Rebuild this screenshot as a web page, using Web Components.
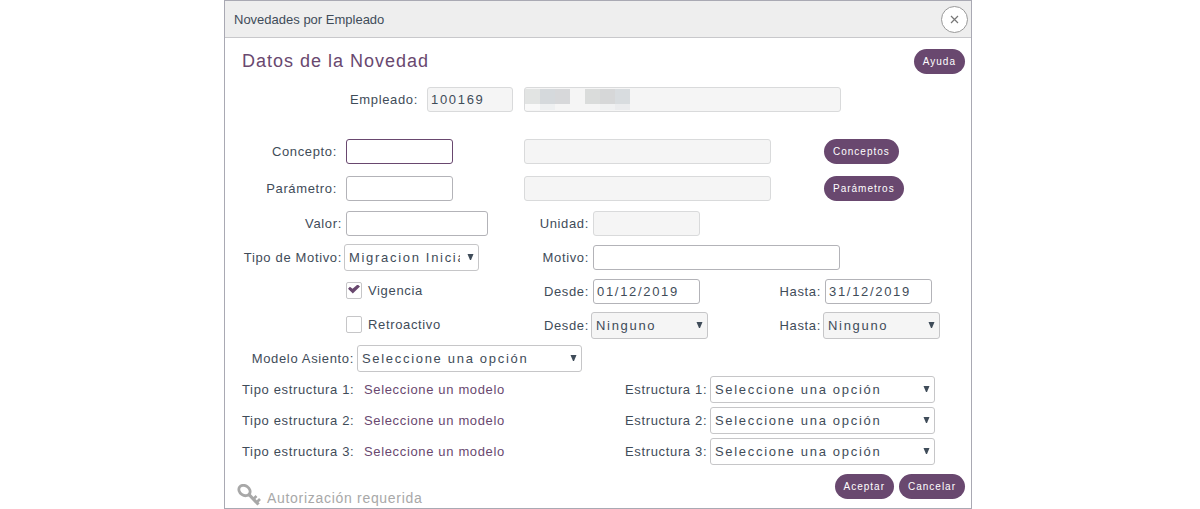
<!DOCTYPE html>
<html lang="es">
<head>
<meta charset="utf-8">
<meta name="viewport" content="width=device-width, initial-scale=1">
<title>Novedades por Empleado</title>
<style>
  :root {
    --ink: #3f4c59;
    --brand: #69486f;
    --line: #b3b3b8;
    --soft: #d9dadb;
    --muted: #f5f5f5;
    --track: 0.05em;
    --track-field: 0.13em;
  }
  body {
    margin: 0;
    padding-right: 4px;
    background: #fff;
    color: var(--ink);
    font: 13px/15px "Liberation Sans", Arial, sans-serif;
  }
</style>
</head>
<body>
<nv-dialog heading="Novedades por Empleado">
  <nv-titlebar heading="Datos de la Novedad"><nv-button label="Ayuda"></nv-button></nv-titlebar>

  <nv-group class="person">
    <nv-row>
      <nv-field class="person-id" label="Empleado:" value="100169" locked></nv-field>
      <nv-field class="wide person-name" name="Nombre del empleado" locked redacted></nv-field>
    </nv-row>
  </nv-group>

  <nv-group class="lookup">
    <nv-row>
      <nv-field class="code" label="Concepto:" active></nv-field>
      <nv-field name="Descripción del concepto" locked></nv-field>
      <nv-button class="inset" label="Conceptos"></nv-button>
    </nv-row>
    <nv-row>
      <nv-field class="code" label="Parámetro:"></nv-field>
      <nv-field name="Descripción del parámetro" locked></nv-field>
      <nv-button class="inset" label="Parámetros"></nv-button>
    </nv-row>
  </nv-group>

  <nv-group class="details">
    <nv-row>
      <nv-field class="amount" label="Valor:"></nv-field>
      <nv-field class="second" label="Unidad:" locked></nv-field>
    </nv-row>
    <nv-row>
      <nv-select class="reason" label="Tipo de Motivo:" options="Migracion Inicial"></nv-select>
      <nv-field class="second wide long" label="Motivo:"></nv-field>
    </nv-row>
    <nv-row>
      <nv-check label="Vigencia" checked></nv-check>
      <nv-field class="second" label="Desde:" value="01/12/2019"></nv-field>
      <nv-field class="third" label="Hasta:" value="31/12/2019"></nv-field>
    </nv-row>
    <nv-row>
      <nv-check label="Retroactivo"></nv-check>
      <nv-select class="second" label="Desde:" options="Ninguno" locked></nv-select>
      <nv-select class="third" label="Hasta:" options="Ninguno" locked></nv-select>
    </nv-row>
  </nv-group>

  <nv-group class="structures">
    <nv-row halves><nv-select class="model" label="Modelo Asiento:" options="Seleccione una opción"></nv-select></nv-row>
    <nv-row halves>
      <nv-info label="Tipo estructura 1:">Seleccione un modelo</nv-info>
      <nv-select class="structure" label="Estructura 1:" options="Seleccione una opción"></nv-select>
    </nv-row>
    <nv-row halves>
      <nv-info label="Tipo estructura 2:">Seleccione un modelo</nv-info>
      <nv-select class="structure" label="Estructura 2:" options="Seleccione una opción"></nv-select>
    </nv-row>
    <nv-row halves>
      <nv-info label="Tipo estructura 3:">Seleccione un modelo</nv-info>
      <nv-select class="structure" label="Estructura 3:" options="Seleccione una opción"></nv-select>
    </nv-row>
  </nv-group>

  <nv-footer note="Autorización requerida">
    <nv-button label="Aceptar"></nv-button>
    <nv-button label="Cancelar"></nv-button>
  </nv-footer>
</nv-dialog>

<script>
class NvElement extends HTMLElement {
  connectedCallback() {
    if (this.shadowRoot) return;
    const t = document.createElement('template');
    t.innerHTML = `<style>*{box-sizing:border-box}:host{box-sizing:border-box}</style>` + this.render();
    this.attachShadow({ mode: 'open' }).append(t.content.cloneNode(true));
  }
  text(name) { return this.getAttribute(name) || ''; }
  flag(name) { return this.hasAttribute(name); }
}

customElements.define('nv-dialog', class extends NvElement {
  render() {
    return `
    <style>
      :host { display: block; max-width: 748px; margin: 0 auto; border: 1px solid #a9a9b3; background: #fff; }
      header { display: flex; align-items: center; justify-content: space-between; height: 37px;
               padding: 0 3px 0 9px; background: #eee; border-bottom: 1px solid #c8c8cb; }
      h1 { margin: 0; font: inherit; }
      button { display: grid; place-items: center; width: 27px; height: 27px; padding: 0;
               border: 1px solid #999; border-radius: 50%; background: #fff; color: #777; }
      .body { padding: 11px 6px 2px 17px; }
      ::slotted(.lookup) { margin-top: 27px; }
      ::slotted(.person) { margin-top: 13px; }
      ::slotted(.details) { --row-gap: 7px; margin-top: 9px; }
      ::slotted(.structures) { --row-gap: 4px; margin-top: 6px; }
    </style>
    <header>
      <h1>${this.text('heading')}</h1>
      <button type="button" aria-label="Cerrar"><svg width="9" height="9" viewBox="0 0 9 9" fill="none" stroke="currentColor" stroke-width="1.200"><path d="M1 1 8 8M8 1 1 8"/></svg></button>
    </header>
    <form class="body"><slot></slot></form>`;
  }
});

customElements.define('nv-titlebar', class extends NvElement {
  render() {
    return `
    <style>
      :host { display: flex; justify-content: space-between; align-items: flex-start; }
      h2 { margin: 0; font-weight: 400; font-size: 18px; line-height: 24px; letter-spacing: 1px; color: var(--brand); }
    </style>
    <h2>${this.text('heading')}</h2><slot></slot>`;
  }
});

customElements.define('nv-group', class extends NvElement {
  render() {
    return `
    <style>
      :host { display: grid; gap: var(--row-gap, 12px); }
      :host(.details) { grid-auto-rows: minmax(27px, auto); }
    </style>
    <slot></slot>`;
  }
});

customElements.define('nv-row', class extends NvElement {
  render() {
    return `
    <style>
      :host { display: grid; grid-template-columns: 277fr 247fr 189fr; column-gap: 5px; align-items: center; }
      :host([halves]) { grid-template-columns: 378fr 340fr; }
      ::slotted(.wide) { grid-column: 2 / -1; }
      ::slotted(.inset) { padding-left: 48px; }
      @media (max-width: 700px) {
        :host, :host([halves]) { grid-template-columns: 1fr; row-gap: 6px; }
        ::slotted(.wide) { grid-column: auto; }
      }
    </style>
    <slot></slot>`;
  }
});

const fieldStyle = `
  :host { display: flex; align-items: center; gap: 4px; --label: 100px; --box: 107px; }
  :host(.second) { --label: 65px; }
  :host(.third) { --label: 45px; }
  label { flex: none; width: var(--label); text-align: right; white-space: nowrap; letter-spacing: var(--track); }
`;

customElements.define('nv-field', class extends NvElement {
  render() {
    const label = this.text('label');
    const blocks = [[0,0,15,15,'#e2e4e3'],[15,0,15,15,'#d5d9dc'],[30,0,15,15,'#d7d8da'],[60,0,15,15,'#dadcdb'],
      [75,0,15,15,'#d6d7d8'],[90,0,15,15,'#d8dcdf'],[0,15,15,6,'#f9f9f9'],[15,15,15,6,'#eef0f1'],
      [75,15,15,6,'#f0f1f2'],[90,15,15,6,'#ebecee']]
      .map(([x, y, w, h, c]) => `<rect x="${x}" y="${y}" width="${w}" height="${h}" fill="${c}"/>`).join('');
    return `
    <style>
      ${fieldStyle}
      :host(.code) { --label: 95px; gap: 9px; }
      :host(.person-id) { --label: 176px; --box: 86px; gap: 9px; }
      :host(.person-name) { --box: 317px; }
      :host(.amount) { --box: 142px; }
      :host(.long), :host([name]:not(.person-name)) { --box: 247px; }
      .box { display: grid; width: var(--box); max-width: 100%; min-width: 0; }
      input, svg { grid-area: 1 / 1; }
      input { width: 100%; height: 25px; padding: 0 3px; border: 1px solid var(--line); border-radius: 3px;
              background: #fff; color: inherit; font: inherit; letter-spacing: var(--track-field); outline: none; }
      :host([locked]) input { background: var(--muted); border-color: var(--soft); }
      :host([active]) input { border-color: var(--brand); }
      svg { margin: 2px 1px; }
    </style>
    ${label ? `<label for="f">${label}</label>` : ''}
    <div class="box">
      <input id="f" type="text" value="${this.text('value')}" ${label ? '' : `aria-label="${this.text('name')}"`} ${this.flag('locked') ? 'readonly' : ''}>
      ${this.flag('redacted') ? `<svg width="105" height="21" aria-hidden="true" shape-rendering="crispEdges">${blocks}</svg>` : ''}
    </div>`;
  }
});

customElements.define('nv-select', class extends NvElement {
  render() {
    const options = this.text('options').split('|').map(o => `<option>${o}</option>`).join('');
    return `
    <style>
      ${fieldStyle}
      :host { gap: 2px; --box: 117px; }
      :host(.reason) { --box: 135px; }
      :host(.model) { --label: 112px; --box: 225px; gap: 3px; }
      :host(.structure) { --label: 82px; --box: 225px; gap: 3px; }
      .box { display: grid; align-items: center; width: var(--box); min-width: 0; }
      select, svg { grid-area: 1 / 1; }
      select { appearance: none; width: 100%; height: 27px; padding: 0 18px 0 4px; border: 1px solid #c6c6c8;
               border-radius: 3px; background: #fff; color: inherit; opacity: 1; font: inherit;
               letter-spacing: var(--track-field); white-space: nowrap; overflow: hidden; text-overflow: clip; }
      :host([locked]) select { background: var(--muted); }
      svg { justify-self: end; margin: 0 5px 2px 0; pointer-events: none; }
    </style>
    <label for="s">${this.text('label')}</label>
    <div class="box">
      <select id="s" ${this.flag('locked') ? 'disabled' : ''}>${options}</select>
      <svg width="7" height="6" viewBox="0 0 7 6" aria-hidden="true"><path d="M0.500 0H6.500L4 6H3Z" fill="#3f4c59"/></svg>
    </div>`;
  }
});

customElements.define('nv-check', class extends NvElement {
  render() {
    return `
    <style>
      :host { display: flex; align-items: center; gap: 6px; padding: 0 0 3px 104px; }
      input { appearance: none; flex: none; width: 16px; height: 17px; margin: 0; border: 1px solid #c6c6c8; border-radius: 2px; background: #fff; }
      input:checked::before { content: ""; display: block; width: 12px; height: 9px; margin: 2px 1px; background: var(--brand);
        clip-path: polygon(0 48%, 16% 26%, 38% 46%, 80% 0, 100% 22%, 40% 100%); }
      label { letter-spacing: var(--track); }
    </style>
    <input id="c" type="checkbox" ${this.flag('checked') ? 'checked' : ''}><label for="c">${this.text('label')}</label>`;
  }
});

customElements.define('nv-info', class extends NvElement {
  render() {
    return `
    <style>
      :host { display: flex; align-items: center; gap: 10px; letter-spacing: var(--track); }
      label { flex: none; width: 112px; text-align: right; white-space: nowrap; }
      output { color: var(--brand); }
    </style>
    <label for="o">${this.text('label')}</label><output id="o"><slot></slot></output>`;
  }
});

customElements.define('nv-button', class extends NvElement {
  render() {
    return `
    <style>
      :host { display: block; }
      button { height: 25px; padding: 0 9px; border: 0; border-radius: 13px; background: var(--brand); color: #fff;
               font: 10px/12px "Liberation Sans", Arial, sans-serif; letter-spacing: 1px; white-space: nowrap; }
    </style>
    <button type="button">${this.text('label')}</button>`;
  }
});

customElements.define('nv-footer', class extends NvElement {
  render() {
    return `
    <style>
      :host { display: flex; align-items: flex-start; gap: 5px; margin-top: 9px; }
      .note { display: flex; align-items: flex-end; gap: 6px; flex: 1; margin: 10px 0 0 -5px; color: #a8a8a8;
              font-size: 14px; line-height: 16px; letter-spacing: var(--track); }
      svg { flex: none; }
    </style>
    <div class="note">
      <svg width="24" height="22" viewBox="0 0 24 22" fill="none" stroke="currentColor" aria-hidden="true">
        <ellipse cx="7.500" cy="6.500" rx="6" ry="4.800" transform="rotate(35 7.500 6.500)" stroke-width="2.800"/>
        <path d="M11 9.500 21.500 20.500" stroke-width="3.200"/>
        <path d="M16 15.500l3.500-3.500M19.500 18.500l3.500-3.500" stroke-width="2.600"/>
      </svg>
      <span>${this.text('note')}</span>
    </div>
    <slot></slot>`;
  }
});
</script>
</body>
</html>
